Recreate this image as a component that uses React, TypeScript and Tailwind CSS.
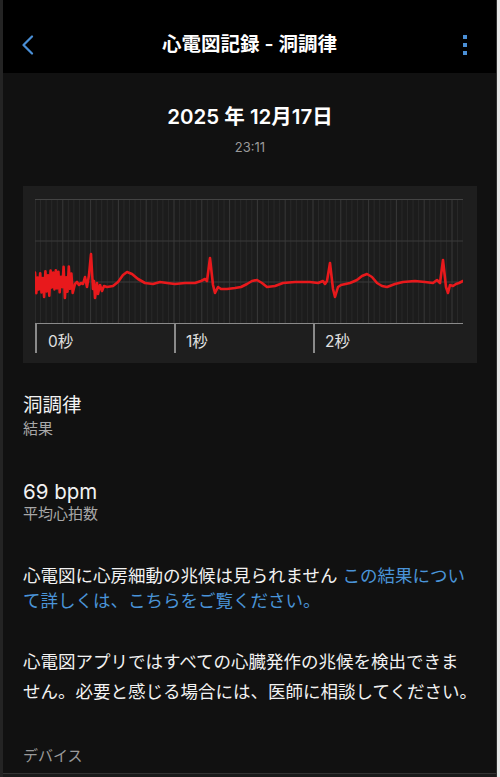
import React from "react";

function buildTrace(): string {
  let seed = 7;
  const rnd = () => {
    seed = (seed * 9301 + 49297) % 233280;
    return seed / 233280;
  };
  const pts: [number, number][] = [];
  let sign = 1;
  for (let x = 0; x <= 38; x += 1.3) {
    const amp = 4 + rnd() * 13;
    pts.push([x, 84 - sign * amp * (sign > 0 ? 1 : 0.9)]);
    sign = -sign;
  }
  const rest: [number, number][] = [
    [40, 85], [42, 83], [44, 86], [46, 84], [48, 85],
    [50, 78], [52, 88], [54, 76], [56, 55], [58, 90], [59, 82], [60, 99], [62, 84], [63, 95], [65, 86], [67, 92], [69, 87], [72, 88],
    [78, 87], [83, 83], [88, 76], [92, 73], [97, 75], [103, 80], [110, 84], [118, 85], [125, 83], [132, 84], [140, 85], [150, 84], [160, 84], [166, 82], [170, 80],
    [172, 82], [175, 59], [178, 86], [180, 94], [183, 88], [186, 90], [192, 90], [200, 89], [206, 88], [212, 85], [217, 82], [222, 81], [227, 84], [232, 88], [240, 87], [248, 84], [260, 83], [275, 83], [283, 84], [288, 82],
    [290, 85], [292, 82], [295, 64], [298, 90], [300, 98], [303, 88], [306, 86], [315, 84], [322, 81], [327, 77], [332, 75], [337, 78], [342, 84], [347, 87], [352, 88], [360, 85], [368, 83], [380, 82], [390, 83], [398, 84], [402, 81], [405, 84],
    [408, 61], [411, 88], [413, 94], [415, 86], [418, 87], [421, 85], [424, 84], [428, 82],
  ];
  const all = pts.concat(rest);
  return all.map((p, i) => `${i === 0 ? "M" : "L"}${p[0].toFixed(1)},${p[1].toFixed(1)}`).join(" ");
}

function EcgGrid() {
  const w = 428;
  const h = 124;
  const minor: number[] = [];
  for (let i = 0; i <= 77; i++) minor.push(i * (139 / 25));
  const d = buildTrace();
  return (
    <svg width={w} height={h} viewBox={`0 0 ${w} ${h}`} className="block">
      <rect x="0" y="0" width={w} height={h} fill="#1c1c1c" />
      {minor.map((x, i) => (
        <line
          key={i}
          x1={x}
          y1={0}
          x2={x}
          y2={h}
          stroke={i % 5 === 0 ? "#383838" : "#292929"}
          strokeWidth={1}
        />
      ))}
      <line x1={0} y1={0.5} x2={w} y2={0.5} stroke="#444" strokeWidth={1} />
      <line x1={0} y1={42} x2={w} y2={42} stroke="#3a3a3a" strokeWidth={1} />
      <line x1={0} y1={83} x2={w} y2={83} stroke="#3a3a3a" strokeWidth={1} />
      <path d={d} fill="none" stroke="#e8191c" strokeWidth={2.6} strokeLinejoin="round" strokeLinecap="round" />
    </svg>
  );
}

export default function App() {
  return (
    <div className="flex h-[777px] w-[500px] overflow-hidden bg-[#111111] font-[Inter,'Noto_Sans_CJK_JP',sans-serif]">
      <div className="w-[3px] bg-[#242424]" />
      <div className="flex min-w-0 flex-1 flex-col">
        <header className="flex h-[73px] shrink-0 items-center justify-between bg-black pl-[17px] pr-[29px] pt-[17px]">
          <svg width="16" height="20" viewBox="0 0 16 20" className="block">
            <path d="M12 1.5 L3.5 10 L12 18.5" fill="none" stroke="#4a8fd6" strokeWidth="2.2" strokeLinecap="round" strokeLinejoin="round" />
          </svg>
          <div className="text-[19.5px] font-semibold text-white">心電図記録 - 洞調律</div>
          <div className="flex flex-col gap-[4px]">
            <div className="h-[4px] w-[4px] bg-[#4a8fd6]" />
            <div className="h-[4px] w-[4px] bg-[#4a8fd6]" />
            <div className="h-[4px] w-[4px] bg-[#4a8fd6]" />
          </div>
        </header>
        <main className="flex flex-1 flex-col pl-[20px] pr-[19px]">
          <div className="mt-[30px] text-center text-[20.5px] font-semibold leading-[28px] text-white">2025 年 12月17日</div>
          <div className="mt-[7px] text-center text-[13px] leading-[18px] text-[#9a9a9a]">23:11</div>
          <div className="mt-[30px] bg-[#1e1e1e] pb-[10px] pl-[12px] pr-[14px] pt-[13px]">
            <EcgGrid />
            <div className="flex w-[428px] border-t border-[#8a8a8a]">
              <div className="h-[29px] w-[139px] border-l-2 border-[#8a8a8a] pl-[11px] pt-[8px] text-[15.5px] leading-[20px] text-[#e0e0e0]">0秒</div>
              <div className="h-[29px] w-[139px] border-l-2 border-[#8a8a8a] pl-[10px] pt-[8px] text-[15.5px] leading-[20px] text-[#e0e0e0]">1秒</div>
              <div className="h-[29px] w-[139px] border-l-2 border-[#8a8a8a] pl-[10px] pt-[8px] text-[15.5px] leading-[20px] text-[#e0e0e0]">2秒</div>
            </div>
          </div>
          <div className="mt-[30px] text-[19.5px] leading-[25px] text-[#f2f2f2]">洞調律</div>
          <div className="mt-[1px] text-[15px] leading-[20px] text-[#a8a8a8]">結果</div>
          <div className="mt-[40px] text-[20.5px] leading-[25px] text-[#f2f2f2]">69 bpm</div>
          <div className="text-[15px] leading-[20px] text-[#a8a8a8]">平均心拍数</div>
          <p className="mt-[39px] whitespace-nowrap text-[17.5px] leading-[25px] text-[#f2f2f2]">
            心電図に心房細動の兆候は見られません <span className="text-[#4a94d8]">この結果につい</span>
            <br />
            <span className="text-[#4a94d8]">て詳しくは、こちらをご覧ください。</span>
          </p>
          <p className="mt-[34px] whitespace-nowrap text-[17.5px] leading-[30px] text-[#f2f2f2]">
            心電図アプリではすべての心臓発作の兆候を検出できま
            <br />
            せん。必要と感じる場合には、医師に相談してください。
          </p>
          <div className="mt-[39px] text-[15px] leading-[20px] text-[#9a9a9a]">デバイス</div>
        </main>
        <div className="h-[4px] shrink-0 border-t border-[#333] bg-[#1a1a1a]" />
      </div>
      <div className="w-[1px] bg-[#2e2e2e]" />
      <div className="w-[3px] bg-[#e8e8e8]" />
    </div>
  );
}
